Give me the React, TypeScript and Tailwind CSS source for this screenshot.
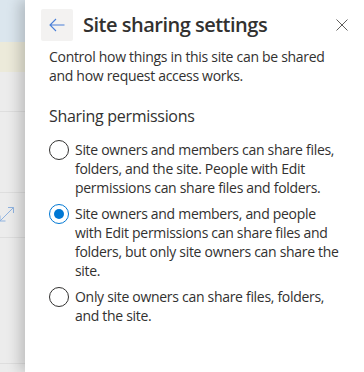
import { useState } from 'react';

const OPTIONS = [
  { id: 'all', label: 'Site owners and members can share files, folders, and the site. People with Edit permissions can share files and folders.' },
  { id: 'edit', label: 'Site owners and members, and people with Edit permissions can share files and folders, but only site owners can share the site.' },
  { id: 'owners', label: 'Only site owners can share files, folders, and the site.' },
];

function Radio({ checked }: { checked: boolean }) {
  return (
    <span
      className={
        checked
          ? 'mt-[-0.5px] flex h-5 w-5 shrink-0 items-center justify-center rounded-full border border-[#0078d4]'
          : 'mt-[-0.5px] flex h-5 w-5 shrink-0 items-center justify-center rounded-full border border-[#323130]'
      }
    >
      {checked && <span className="h-[10px] w-[10px] rounded-full bg-[#0078d4]" />}
    </span>
  );
}

export default function App() {
  const [value, setValue] = useState('edit');

  return (
    <div className="flex h-[372px] w-[364px] overflow-hidden bg-white font-['Open_Sans',sans-serif] text-[#323130]">
      {/* page behind the panel */}
      <div className="flex w-[25px] shrink-0 flex-col">
        <div className="h-[42px] bg-[#dbe6ee]" />
        <div className="h-[30px] bg-[#eceada]" />
        <div className="relative flex-1 bg-[#ececec]">
          <div className="h-[40px] border-b border-[#dedede]" />
          <div className="h-[81px] border-b border-[#dedede]" />
          <div className="flex h-[45px] items-center border-b border-[#dedede]">
            <svg width="15" height="16" viewBox="0 0 15 16" className="ml-[-1px] mt-[-3px]" fill="none" stroke="#8fb3e0" strokeWidth="1">
              <path d="M1 15L14.5 1.5M9 1.5h5.5V7M1 9.5V15h5.5" />
            </svg>
          </div>
          <div className="h-[126px] border-b border-[#dedede]" />
        </div>
      </div>

      {/* panel */}
      <div className="relative z-10 flex-1 bg-white shadow-[-6px_0_12px_rgba(0,0,0,0.18)]">
        <div className="flex items-center pl-4 pr-[6px] pt-[9px]">
          <button className="flex h-8 w-8 items-center justify-center rounded-[2px] bg-[#f3f2f1]">
            <svg width="16" height="14" viewBox="0 0 16 14" fill="none" stroke="#4a7fd8" strokeWidth="1.1">
              <path d="M15.5 7H1M7 1L1 7l6 6" />
            </svg>
          </button>
          <h1 className="ml-[10px] text-[20px] font-semibold leading-7 tracking-[-0.5px] text-[#323130]">Site sharing settings</h1>
          <button className="ml-auto flex h-8 w-8 items-center justify-center">
            <svg width="12" height="12" viewBox="0 0 12 12" stroke="#605e5c" strokeWidth="1">
              <path d="M0.5 0.5l11 11M11.5 0.5l-11 11" />
            </svg>
          </button>
        </div>

        <div className="px-6 tracking-[-0.3px]">
          <p className="mt-[6px] text-[14px] leading-[19px]">
            Control how things in this site can be shared and how request access works.
          </p>

          <h2 className="mt-[20px] text-[16px] font-medium leading-[22px]">Sharing permissions</h2>

          <div className="mt-[13px] flex flex-col gap-[7px]">
            {OPTIONS.map(o => (
              <label key={o.id} className="flex cursor-pointer items-start gap-[6px]" onClick={() => setValue(o.id)}>
                <Radio checked={value === o.id} />
                <span className="text-[14px] leading-[19px]">{o.label}</span>
              </label>
            ))}
          </div>
        </div>
      </div>
    </div>
  );
}
